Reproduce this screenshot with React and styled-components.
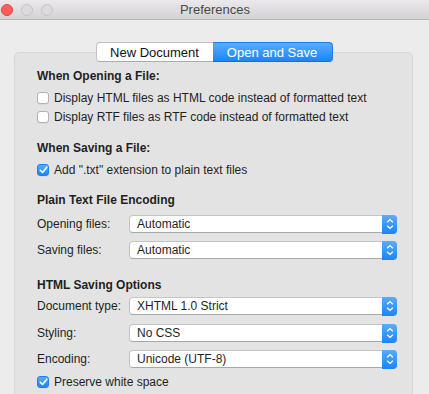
import styled, { createGlobalStyle } from 'styled-components';

const GlobalStyle = createGlobalStyle`
  html, body {
    margin: 0;
    padding: 0;
    background: #ececec;
  }
  * {
    box-sizing: border-box;
  }
`;

const Window = styled.div`
  width: 429px;
  height: 394px;
  overflow: hidden;
  background: #ececec;
  font-family: 'Liberation Sans', Arial, sans-serif;
  font-size: 13px;
  color: #1f1f1f;
`;

const TitleBar = styled.div`
  display: grid;
  grid-template-columns: 1fr auto 1fr;
  align-items: center;
  height: 20px;
  padding-left: 1px;
  background: linear-gradient(#ebe9eb, #d4d2d4);
  border-bottom: 1px solid #b4b4b4;
`;

const Lights = styled.div`
  display: flex;
  gap: 8px;
`;

const Light = styled.span`
  width: 12px;
  height: 12px;
  border-radius: 50%;
  background: ${(p) => (p.$red ? '#fb5f59' : '#dcdadc')};
  border: 1px solid ${(p) => (p.$red ? '#e1463f' : '#c6c4c6')};
`;

const Title = styled.div`
  color: #4a4a4a;
  font-size: 13px;
  line-height: 18px;
`;

const Body = styled.div`
  padding: 22px 16px 0 14px;
`;

const Tabs = styled.div`
  position: relative;
  z-index: 1;
  display: flex;
  justify-content: center;
  margin: 0 0 -10px 1px;
`;

const Segment = styled.div`
  width: ${(p) => p.$w}px;
  height: 20px;
  display: flex;
  align-items: center;
  justify-content: center;
  font-size: 13px;
  background: ${(p) =>
    p.$active ? 'linear-gradient(#5aacfd, #1c84fb)' : '#ffffff'};
  color: ${(p) => (p.$active ? '#ffffff' : '#111')};
  border: 1px solid ${(p) => (p.$active ? '#1b7cf0' : '#c2c2c2')};
  border-bottom-color: ${(p) => (p.$active ? '#1470e0' : '#acacac')};
  border-radius: ${(p) => (p.$first ? '4px 0 0 4px' : '0 4px 4px 0')};
  ${(p) => (p.$first ? 'border-right: none;' : 'border-left: none;')}
`;

const Panel = styled.div`
  background: #e3e3e3;
  border: 1px solid #d7d7d7;
  border-radius: 5px;
  padding: 15px 15px 30px 22px;
  font-size: 12px;
`;

const Heading = styled.div`
  font-weight: bold;
  line-height: 16px;
  margin-top: ${(p) => p.$mt || 0}px;
`;

const CheckRow = styled.label`
  display: flex;
  align-items: center;
  gap: 5px;
  height: 19px;
  margin-top: ${(p) => p.$mt || 0}px;
`;

const Box = styled.span`
  width: 12px;
  height: 12px;
  border-radius: 3px;
  display: flex;
  align-items: center;
  justify-content: center;
  flex-shrink: 0;
  background: ${(p) => (p.$checked ? 'linear-gradient(#5aacfd, #1c84fb)' : '#fff')};
  border: 1px solid ${(p) => (p.$checked ? '#1d7ff2' : '#b2b2b2')};
  box-shadow: 0 0.5px 0 rgba(0, 0, 0, 0.08);
`;

const SelectRow = styled.div`
  display: flex;
  align-items: center;
  height: 20px;
  margin-top: ${(p) => p.$mt || 0}px;
`;

const Label = styled.span`
  width: 92px;
  flex-shrink: 0;
`;

const Select = styled.div`
  flex: 1;
  height: 18px;
  display: flex;
  align-items: stretch;
  background: #fff;
  border-radius: 4px;
  border: 1px solid #c4c4c4;
  border-bottom-color: #a8a8a8;
  border-bottom-width: 1.5px;
`;

const Value = styled.span`
  flex: 1;
  padding-left: 7px;
  line-height: 16px;
`;

const Stepper = styled.span`
  width: 15px;
  margin: -1px -1px -1.5px 0;
  border-radius: 0 4px 4px 0;
  background: linear-gradient(#5aacfd, #1c84fb);
  display: flex;
  align-items: center;
  justify-content: center;
`;

const Check = () => (
  <svg width="9" height="8" viewBox="0 0 9 8">
    <path d="M1.3 4.2 L3.5 6.4 L7.8 1.2" fill="none" stroke="#fff" strokeWidth="1.6" strokeLinecap="round" strokeLinejoin="round" />
  </svg>
);

const Arrows = () => (
  <svg width="8" height="12" viewBox="0 0 8 12">
    <path d="M1.2 4.3 L4 1.6 L6.8 4.3 M1.2 7.7 L4 10.4 L6.8 7.7" fill="none" stroke="#fff" strokeWidth="1.3" />
  </svg>
);

const Checkbox = ({ checked, children, mt }) => (
  <CheckRow $mt={mt}>
    <Box $checked={checked}>{checked && <Check />}</Box>
    <span>{children}</span>
  </CheckRow>
);

const Popup = ({ label, value, mt }) => (
  <SelectRow $mt={mt}>
    <Label>{label}</Label>
    <Select>
      <Value>{value}</Value>
      <Stepper>
        <Arrows />
      </Stepper>
    </Select>
  </SelectRow>
);

export default function App() {
  return (
    <Window>
      <GlobalStyle />
      <TitleBar>
        <Lights>
          <Light $red />
          <Light />
          <Light />
        </Lights>
        <Title>Preferences</Title>
        <span />
      </TitleBar>
      <Body>
        <Tabs>
          <Segment $first $w={117}>New Document</Segment>
          <Segment $active $w={120}>Open and Save</Segment>
        </Tabs>
        <Panel>
          <Heading>When Opening a File:</Heading>
          <Checkbox mt={4}>Display HTML files as HTML code instead of formatted text</Checkbox>
          <Checkbox>Display RTF files as RTF code instead of formatted text</Checkbox>

          <Heading $mt={14}>When Saving a File:</Heading>
          <Checkbox checked mt={4}>Add ".txt" extension to plain text files</Checkbox>

          <Heading $mt={13}>Plain Text File Encoding</Heading>
          <Popup mt={6} label="Opening files:" value="Automatic" />
          <Popup mt={6} label="Saving files:" value="Automatic" />

          <Heading $mt={17}>HTML Saving Options</Heading>
          <Popup mt={3} label="Document type:" value="XHTML 1.0 Strict" />
          <Popup mt={7} label="Styling:" value="No CSS" />
          <Popup mt={6} label="Encoding:" value="Unicode (UTF-8)" />
          <Checkbox checked mt={3}>Preserve white space</Checkbox>
        </Panel>
      </Body>
    </Window>
  );
}
